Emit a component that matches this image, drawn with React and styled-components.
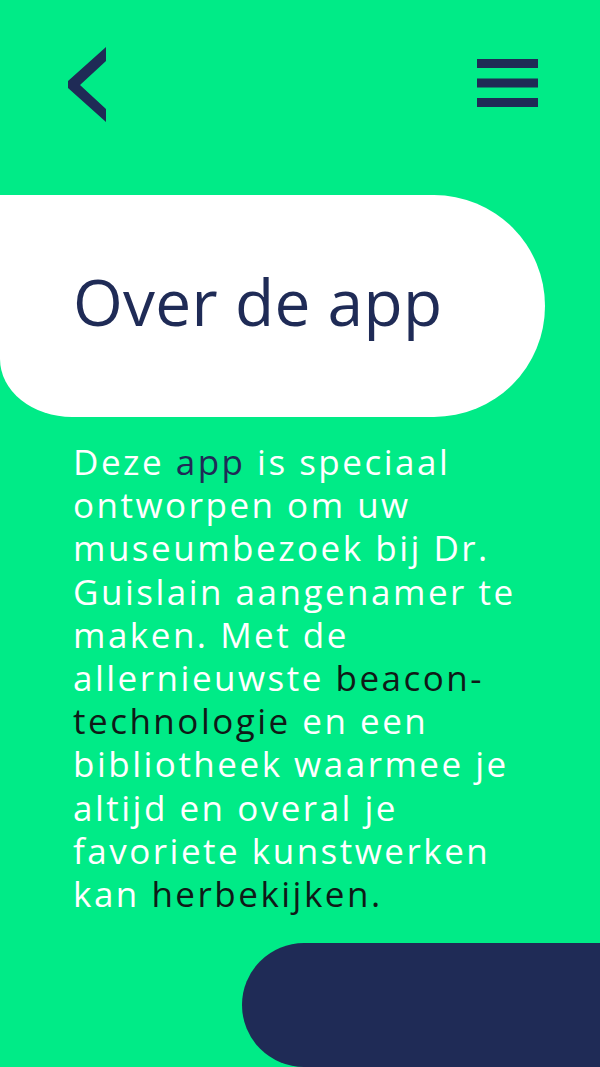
import React from "react";
import styled, { createGlobalStyle } from "styled-components";

const GREEN = "#00eb87";
const NAVY = "#1f2b56";

const Global = createGlobalStyle`
  html, body { margin: 0; padding: 0; background: ${GREEN}; }
  body { font-family: "Open Sans", "Noto Sans", sans-serif; }
`;

const Screen = styled.div`
  width: 600px;
  height: 100vh;
  min-height: 1067px;
  background: ${GREEN};
  display: flex;
  flex-direction: column;
  overflow: hidden;
`;

const TopBar = styled.header`
  display: flex;
  justify-content: space-between;
  align-items: flex-start;
  padding: 47px 62px 0 68px;
  height: 148px;
`;

const IconButton = styled.button`
  background: none;
  border: 0;
  padding: 0;
  margin-top: ${(p) => p.$offset || 0}px;
  display: block;
  cursor: pointer;
  svg { display: block; }
`;

const TitlePill = styled.div`
  width: 471px;
  height: 222px;
  padding-left: 74px;
  background: #fff;
  border-radius: 0 111px 111px 0;
  border-bottom-left-radius: 72px 58px;
  display: flex;
  align-items: center;
`;

const Title = styled.h1`
  margin: 0 0 10px -1px;
  font-size: 64px;
  font-weight: 500;
  color: ${NAVY};
  letter-spacing: 0.3px;
  white-space: nowrap;
`;

const Body = styled.p`
  margin: 23px 0 0;
  padding-left: 73px;
  font-size: 35px;
  line-height: 43.2px;
  letter-spacing: 2.5px;
  color: #fff;
  font-weight: 400;
  white-space: nowrap;
`;

const Mark = styled.span`
  color: ${(p) => (p.$tone === "navy" ? NAVY : "#0f1a17")};
`;

const FooterPill = styled.div`
  margin-top: auto;
  align-self: flex-end;
  width: 358px;
  height: 124px;
  background: ${NAVY};
  border-radius: 62px 0 0 62px;
`;

export default function App() {
  return (
    <Screen>
      <Global />
      <TopBar>
        <IconButton aria-label="Terug">
          <svg width="38" height="75" viewBox="0 0 38 75">
            <polygon points="38,0 38,14 12,38 38,62 38,75 0,41 0,34" fill={NAVY} />
          </svg>
        </IconButton>
        <IconButton aria-label="Menu" $offset={12}>
          <svg width="61" height="48" viewBox="0 0 61 48">
            <rect x="0" y="0" width="61" height="9" fill={NAVY} />
            <rect x="0" y="19.5" width="61" height="9" fill={NAVY} />
            <rect x="0" y="39" width="61" height="9" fill={NAVY} />
          </svg>
        </IconButton>
      </TopBar>
      <TitlePill>
        <Title>Over de app</Title>
      </TitlePill>
      <Body>
        Deze <Mark $tone="navy">app</Mark> is speciaal
        <br />
        ontworpen om uw
        <br />
        museumbezoek bij Dr.
        <br />
        Guislain aangenamer te
        <br />
        maken. Met de
        <br />
        allernieuwste <Mark>beacon-</Mark>
        <br />
        <Mark>technologie</Mark> en een
        <br />
        bibliotheek waarmee je
        <br />
        altijd en overal je
        <br />
        favoriete kunstwerken
        <br />
        kan <Mark>herbekijken.</Mark>
      </Body>
      <FooterPill />
    </Screen>
  );
}
